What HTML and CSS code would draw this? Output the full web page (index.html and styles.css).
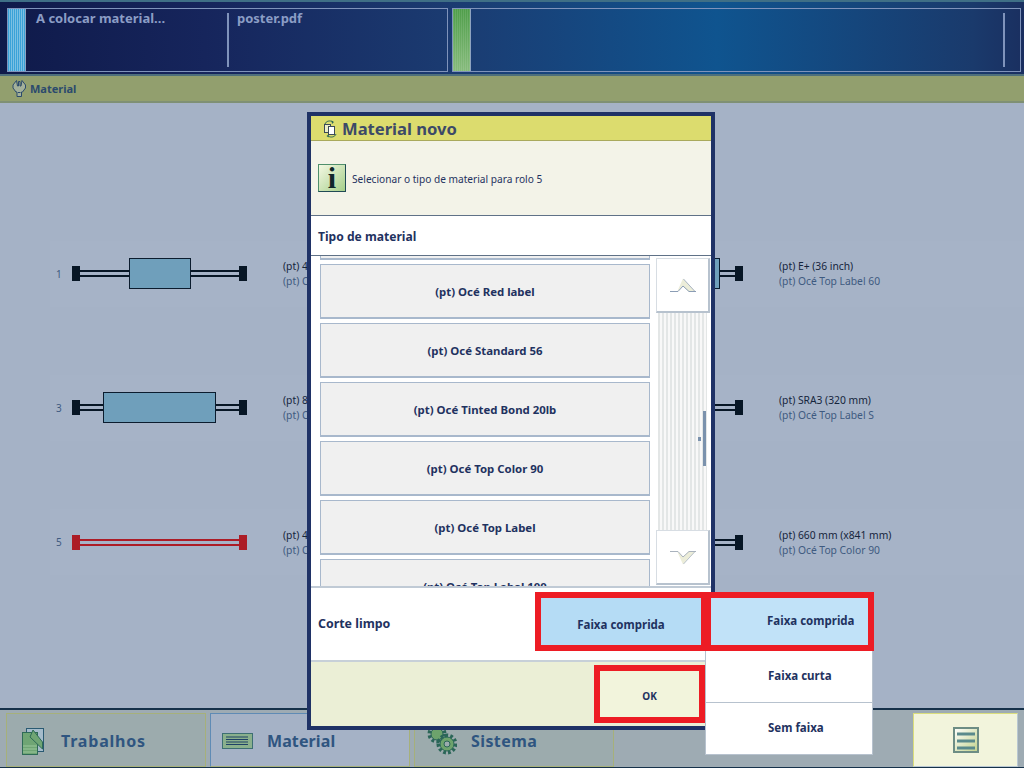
FILE: index.html
```html
<!DOCTYPE html>
<html lang="pt">
<head>
<meta charset="utf-8">
<title>Material</title>
<link rel="stylesheet" href="styles.css">
</head>
<body>
<div class="screen">
  <header class="status">
    <div class="status-box job">
      <div class="strip strip-blue"></div>
      <div class="job-cell cell-a">A colocar material...</div>
      <div class="job-cell cell-b">poster.pdf</div>
    </div>
    <div class="status-box printer">
      <div class="strip strip-green"></div>
      <div class="printer-fill"></div>
      <div class="printer-end"></div>
    </div>
  </header>

  <div class="titlebar">
    <svg class="title-icon" width="14" height="17" viewBox="0 0 14 17"><path d="M4.500.5 1 5v3l3 4h1v4.500h4.500V12h1l3-4V5L10 .5 9 6H8V1.500H6.500V6h-1z" fill="#a3b09a" stroke="#2b4a6d"/><path d="M6 12.500h2.500" stroke="#2b4a6d"/></svg>
    <span>Material</span>
  </div>

  <main class="rolls">
    <section class="roll-row">
      <span class="roll-no">1</span>
      <div class="roll"><i class="holder"></i><i class="axle"></i><i class="media" style="width:62px"></i><i class="axle"></i><i class="holder"></i></div>
      <div class="roll-text"><b>(pt) 420 mm</b><em>(pt) Océ Top Label</em></div>
    </section>
    <section class="roll-row">
      <span class="roll-no">2</span>
      <div class="roll"><i class="holder"></i><i class="axle"></i><i class="media" style="width:128px"></i><i class="axle short"></i><i class="holder"></i></div>
      <div class="roll-text"><b>(pt) E+ (36 inch)</b><em>(pt) Océ Top Label 60</em></div>
    </section>
    <section class="roll-row">
      <span class="roll-no">3</span>
      <div class="roll"><i class="holder"></i><i class="axle"></i><i class="media" style="width:113px"></i><i class="axle"></i><i class="holder"></i></div>
      <div class="roll-text"><b>(pt) 841 mm</b><em>(pt) Océ Top Label</em></div>
    </section>
    <section class="roll-row">
      <span class="roll-no">4</span>
      <div class="roll"><i class="holder"></i><i class="axle"></i><i class="axle"></i><i class="holder"></i></div>
      <div class="roll-text"><b>(pt) SRA3 (320 mm)</b><em>(pt) Océ Top Label S</em></div>
    </section>
    <section class="roll-row">
      <span class="roll-no">5</span>
      <div class="roll red"><i class="holder"></i><i class="axle"></i><i class="holder"></i></div>
      <div class="roll-text"><b>(pt) 420 mm</b><em>(pt) Océ Top Label</em></div>
    </section>
    <section class="roll-row">
      <span class="roll-no">6</span>
      <div class="roll"><i class="holder"></i><i class="axle"></i><i class="holder"></i></div>
      <div class="roll-text"><b>(pt) 660 mm (x841 mm)</b><em>(pt) Océ Top Color 90</em></div>
    </section>
  </main>

  <nav class="tabs">
    <a class="tab tab-jobs">
      <svg class="tab-icon" width="22" height="27" viewBox="0 0 22 27"><rect x="4.500" y=".5" width="17" height="23" fill="#a5bccb" stroke="#2a5a72"/><rect x=".5" y="4.500" width="15" height="22" fill="#6fa574" stroke="#2f6b57"/><path d="M1 18h14M1 21h14M1 24h14" stroke="#9cc79c"/><path d="M11 2 20.500 14v7L8 9z" fill="#6fa574" stroke="#2f6b57"/></svg>
      <span class="tab-label label-jobs">Trabalhos</span>
    </a>
    <a class="tab tab-material">
      <svg class="tab-icon" width="31" height="16" viewBox="0 0 31 16"><rect x=".5" y=".5" width="30" height="15" fill="#8ab08c" stroke="#3d6f73"/><path d="M4 4h22M4 6.500h22M4 9h22M4 11.500h22" stroke="#1f4267"/></svg>
      <span class="tab-label label-material">Material</span>
    </a>
    <a class="tab tab-system">
      <svg class="gears" width="30" height="30" viewBox="0 0 30 30"><g fill="none"><circle cx="10" cy="9" r="7" stroke="#2b6658" stroke-width="5" stroke-dasharray="2.500 2"/><circle cx="10" cy="9" r="6" fill="#6da36c" stroke="#2b6658"/><circle cx="20" cy="19" r="8" stroke="#2b6658" stroke-width="5" stroke-dasharray="2.500 2"/><circle cx="20" cy="19" r="7" fill="#6da36c" stroke="#2b6658"/><circle cx="20" cy="19" r="3" fill="#9cabad" stroke="#2b6658"/></g></svg>
      <span class="tab-label label-system">Sistema</span>
    </a>
    <a class="menu-btn">
      <svg width="26" height="26" viewBox="0 0 26 26"><defs><linearGradient id="mg" x1="0" y1="0" x2="1" y2="1"><stop offset="0" stop-color="#fff"/><stop offset="1" stop-color="#c2d28a"/></linearGradient></defs><rect x="1" y="1" width="24" height="24" fill="url(#mg)" stroke="#6d8d85" stroke-width="2"/><path d="M4 7h18M4 14h18M4 21h18" stroke="#5a8a8c" stroke-width="3"/></svg>
    </a>
  </nav>

  <div class="dialog">
    <div class="dlg-title">
      <svg width="16" height="18" viewBox="0 0 16 18"><path d="M3 4C4 1 8 0 11 2" fill="none" stroke="#2e6a55"/><path d="M14 14c-1 3-5 4-8 2" fill="none" stroke="#2e6a55"/><path d="M9.500 0.500 12 2l-2 2zM7 14l-2.500 2 2 1.500z" fill="#2e6a55"/><rect x="2.500" y="4.500" width="6" height="8" fill="#eef0c8" stroke="#3c4a58"/><rect x="6.500" y="6.500" width="6" height="8" fill="#fff" stroke="#3c4a58"/></svg>
      <span>Material novo</span>
    </div>
    <div class="dlg-info">
      <div class="info-icon">i</div>
      <span>Selecionar o tipo de material para rolo 5</span>
    </div>
    <div class="dlg-head"><span>Tipo de material</span></div>
    <div class="dlg-list">
      <div class="items">
        <div class="item item-cut"></div>
        <div class="item">(pt) Océ Red label</div>
        <div class="item">(pt) Océ Standard 56</div>
        <div class="item">(pt) Océ Tinted Bond 20lb</div>
        <div class="item">(pt) Océ Top Color 90</div>
        <div class="item">(pt) Océ Top Label</div>
        <div class="item">(pt) Océ Top Label 100</div>
      </div>
      <div class="scroller">
        <div class="scroll-btn">
          <svg width="26" height="15" viewBox="0 0 26 15"><path d="M7 14 13 .5 26 14h-7l-6-6z" fill="#ecedd9"/><path d="M13.500 1 25 13.500" stroke="#a9b5c4" fill="none"/><path d="M0 13.500h8L13 8l6 5.500h7" fill="none" stroke="#8b9db5"/></svg>
        </div>
        <div class="track"><i class="thumb"></i><i class="thumb-dot"></i></div>
        <div class="scroll-btn">
          <svg width="26" height="15" viewBox="0 0 26 15"><path d="M7 1 13 14.500 26 1h-7l-6 6z" fill="#ecedd9"/><path d="M13.500 14 25 1.500" stroke="#b9c2cc" fill="none"/><path d="M0 1.500h8L13 7l6-5.500h7" fill="none" stroke="#a9b2bd"/></svg>
        </div>
      </div>
    </div>
    <div class="dlg-option">
      <span>Corte limpo</span>
      <button class="select-btn flagged">Faixa comprida</button>
    </div>
    <div class="dlg-foot">
      <button class="ok-btn flagged">OK</button>
    </div>
  </div>

  <div class="popup">
    <div class="pop-item pop-sel flagged">Faixa comprida</div>
    <div class="pop-item">Faixa curta</div>
    <div class="pop-item">Sem faixa</div>
  </div>
</div>
</body>
</html>
```
FILE: styles.css
```css
* { box-sizing: border-box; }
html, body { margin: 0; padding: 0; }
body { font-family: "Noto Sans", "DejaVu Sans", sans-serif; }
.screen { position: relative; width: 1024px; height: 768px; overflow: hidden; display: flex; flex-direction: column; background: #a5b2c6; }

.status { height: 76px; flex: none; display: flex; gap: 4px; padding: 8px 3px 0 7px; background: linear-gradient(90deg, #0f1a4a 0%, #16255c 20%, #1b3c72 45%, #0f548f 70%, #1a3a6c 95%, #1a2f60 100%); border-top: 2px solid #3f6f86; border-bottom: 2px solid #4d6f7c; }
.status-box { height: 64px; margin-top: -2px; display: flex; border: 1px solid #7f93bb; position: relative; }
.job { width: 441px; }
.printer { flex: 1; }
.strip { width: 18px; flex: none; border-right: 1px solid #8ea3c0; }
.strip-blue { background: repeating-linear-gradient(90deg, #3aa2d8 0 1px, #7cc0e3 1px 2px); }
.strip-green { background: repeating-linear-gradient(90deg, rgba(255,255,255,.1) 0 1px, transparent 1px 2px), linear-gradient(#4f9e4a, #86bb7c); }
.job-cell { font-size: 13px; font-weight: 700; color: #8b9dc5; padding: 0 0 0 10px; line-height: 18px; }
.cell-a { width: 201px; }
.cell-b { flex: 1; position: relative; }
.cell-b::before { content: ""; position: absolute; left: 0; top: 4px; height: 54px; width: 2px; background: #7f93bb; }
.printer-fill { flex: 1; }
.printer-end { width: 2px; margin: 4px 15px 4px 0; background: #7f93bb; }

.titlebar { height: 27px; flex: none; display: flex; align-items: center; gap: 4px; padding-left: 12px; background: #929f6e; border-bottom: 2px solid #7f9074; color: #2b4a6d; font-size: 11px; font-weight: 700; }

.rolls { flex: 1; display: grid; grid-template-columns: 496px 1fr; grid-auto-rows: 66px; row-gap: 68.300px; padding: 137.500px 0 0 50px; align-content: start; }
.roll-row { display: flex; align-items: center; background: #a6b3c7; }
.roll-no { width: 22px; font-size: 10px; color: #3e5a80; padding-left: 6px; }
.roll { width: 175px; display: flex; align-items: center; flex: none; }
.holder { width: 8px; height: 15px; background: #071625; flex: none; }
.axle { flex: 1; height: 7px; border-top: 2px solid #071625; border-bottom: 2px solid #071625; }
.axle.short { flex: 0 0 15px; }
.media { height: 31px; flex: none; background: #6f9fbb; border: 1px solid #0b1c2e; }
.roll.red .holder { background: #ac1c26; }
.roll.red .axle { border-color: #ac1c26; }
.roll-text { margin: 1px 0 0 36px; display: flex; flex-direction: column; font-size: 10.300px; line-height: 15px; }
.roll-text b { font-weight: 400; color: #15253c; }
.roll-text em { font-style: normal; color: #3e5a80; }

.tabs { height: 60px; flex: none; display: flex; gap: 4px; padding: 3px 6px 0 6px; background: #9eabb3; border-top: 2px solid #16314a; border-bottom: 1px solid #16314a; position: relative; }
.tab { width: 200px; display: flex; align-items: center; border: 1px solid #a6b07a; background: #9cabad; color: #2f5580; font-size: 16px; font-weight: 700; }
.tab-jobs { padding-left: 15px; }
.tab-material { background: #a5b2c6; border-color: #5f8bb5 #a6b07a #a6b07a #5f8bb5; padding-left: 11px; }
.tab-system { padding-left: 12px; }
.tab-label { margin-top: 2px; letter-spacing: .4px; }
.tab-icon { margin-top: 2px; }
.gears { margin-top: -1px; }
.label-jobs { margin-left: 17px; letter-spacing: .8px; }
.label-material { margin-left: 14px; letter-spacing: .1px; }
.label-system { margin-left: 14px; }
.menu-btn { margin-left: auto; width: 105px; display: flex; align-items: center; justify-content: center; background: #f2f4dc; border: 1px solid #dadd7c; border-right-color: #b9c7d2; border-bottom-color: #b9c7d2; }

.dialog { position: absolute; left: 307px; top: 112px; width: 408px; height: 618px; border: 4px solid #1f3266; background: #fff; display: flex; flex-direction: column; color: #1f3260; }
.dlg-title { height: 25px; flex: none; display: flex; align-items: center; gap: 4px; padding: 1px 0 0 11px; background: #dcdc6e; border-bottom: 1px solid #a9a95c; color: #3c4a68; font-size: 16.600px; font-weight: 700; }
.dlg-info { height: 75px; flex: none; display: flex; align-items: center; gap: 6px; padding-left: 7px; background: #f3f3e8; border-bottom: 1px solid #5f7187; font-size: 10.150px; }
.dlg-info span { margin-top: 1px; }
.info-icon { width: 28px; height: 28px; display: flex; align-items: center; justify-content: center; background: linear-gradient(135deg, #f4f8e4, #a5cf8a); border: 1px solid #4f8f6c; border-right-color: #1f4a55; border-bottom-color: #1f4a55; font-family: "Liberation Serif", serif; font-size: 30px; font-weight: 700; color: #10262a; }
.dlg-head { height: 40px; flex: none; display: flex; align-items: center; padding-left: 7px; border-bottom: 1px solid #5f7187; font-size: 12.100px; font-weight: 700; }
.dlg-head span { margin-top: 1px; }
.dlg-list { height: 332px; flex: none; display: flex; overflow: hidden; border-bottom: 2px solid #c0cad5; }
.items { width: 339px; flex: none; padding-left: 9px; overflow: hidden; display: flex; flex-direction: column; gap: 4px; }
.item { height: 55px; flex: none; display: flex; align-items: center; justify-content: center; background: #f0f0f0; border: 1px solid #a8b8cc; border-bottom-width: 2px; font-size: 11.400px; font-weight: 700; }
.item-cut { height: 4px; border-top: 0; }
.scroller { width: 54px; margin-left: 6px; padding: 2px 0 1px; display: flex; flex-direction: column; }
.scroll-btn { height: 55px; flex: none; display: flex; align-items: center; justify-content: center; background: #fff; border: 1px solid #d7dde3; border-right: 2px solid #b7c2ce; border-bottom: 2px solid #b7c2ce; }
.track { flex: 1; margin: 0 3px 0 2px; position: relative; background: repeating-linear-gradient(90deg, #e3e6e6 0 2px, #f8f8f8 2px 4px); }
.thumb { position: absolute; right: 1px; top: 98px; width: 3px; height: 55px; background: #7b92ad; }
.thumb-dot { position: absolute; right: 6px; top: 124px; width: 3px; height: 4px; background: #7b92ad; }
.dlg-option { height: 74px; flex: none; display: flex; align-items: flex-start; justify-content: space-between; padding: 4px 5px 0 7px; border-bottom: 2px solid #c7d0d8; font-size: 12.400px; font-weight: 700; }
.dlg-option span { margin-top: 23px; }
.flagged { border: 6px solid #ed1c24; }
.select-btn { width: 172px; height: 59px; margin-right: -1px; background: #b5dcf5; color: #1f3260; font: 700 11.500px "Noto Sans", sans-serif; padding: 5px 0 0; }
.dlg-foot { flex: 1; display: flex; justify-content: flex-end; padding: 3px 6px 0 0; background: #ebefd6; }
.ok-btn { width: 111px; height: 58px; background: #f2f4dc; color: #1f3260; font: 700 10px "Noto Sans", sans-serif; padding: 3px 0 0; }

.popup { position: absolute; left: 705px; top: 592px; width: 168px; display: flex; flex-direction: column; background: #fff; color: #1f3260; font-size: 11.500px; font-weight: 700; }
.pop-item { height: 52px; display: flex; align-items: center; padding: 0 0 3px 62px; border: 1px solid #b7c2ce; border-top: 0; }
.pop-sel { height: 59px; margin-right: -1px; border: 6px solid #ed1c24; background: #c1e2f8; padding: 0 0 2px 56px; }
```
